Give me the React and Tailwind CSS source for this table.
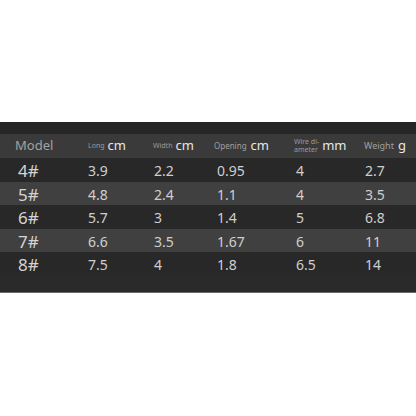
import React from 'react'

const rows = [
  ['4#', '3.9', '2.2', '0.95', '4', '2.7'],
  ['5#', '4.8', '2.4', '1.1', '4', '3.5'],
  ['6#', '5.7', '3', '1.4', '5', '6.8'],
  ['7#', '6.6', '3.5', '1.67', '6', '11'],
  ['8#', '7.5', '4', '1.8', '6.5', '14'],
]

const cols = 'grid grid-cols-[88px_65px_62px_76px_73px_52px] items-center'

function Head({ small, unit }) {
  return (
    <div className="flex items-center gap-[3px]">
      <span className="text-[7px] text-[#9a9a9a]">{small}</span>
      <span className="text-[13px] text-[#e6e6e6]">{unit}</span>
    </div>
  )
}

export default function App() {
  return (
    <div className="w-[416px] h-[416px] bg-white font-['Noto_Sans',sans-serif] flex flex-col">
      <div className="h-[122px]" />
      <div className="bg-[#282828] h-[171px] flex flex-col border-b border-[#6a6a6a]">
        <div className="h-[12px] bg-[#262626]" />
        <div className={`${cols} h-[24px] bg-[#3a3a3a]`}>
          <div className="pl-[15px] text-[13px] text-[#a3a3a3]">Model</div>
          <Head small="Long" unit="cm" />
          <Head small="Width" unit="cm" />
          <div className="flex items-center gap-[4px] -ml-[1px]">
            <span className="text-[8px] text-[#a0a0a0]">Opening</span>
            <span className="text-[13px] text-[#e6e6e6]">cm</span>
          </div>
          <div className="flex items-center gap-[3px] pl-[3px]">
            <span className="text-[7px] leading-[8px] text-[#9a9a9a]">Wire di-<br />ameter</span>
            <span className="text-[13px] text-[#e6e6e6]">mm</span>
          </div>
          <div className="flex items-center gap-[4px]">
            <span className="text-[9px] text-[#a0a0a0]">Weight</span>
            <span className="text-[13px] text-[#e6e6e6]">g</span>
          </div>
        </div>
        {rows.map((r, i) => (
          <div
            key={r[0]}
            className={`${cols} h-[23.5px] ${i % 2 === 0 ? 'bg-[#282828]' : 'bg-[#404040]'}`}
          >
            <div className="pl-[18px] text-[17px] text-[#d4d4d4]">{r[0]}</div>
            <div className="text-[14px] text-[#cfcfcf]">{r[1]}</div>
            <div className="pl-[1px] text-[14px] text-[#cfcfcf]">{r[2]}</div>
            <div className="pl-[2px] text-[14px] text-[#cfcfcf]">{r[3]}</div>
            <div className="pl-[5px] text-[14px] text-[#cfcfcf]">{r[4]}</div>
            <div className="pl-[1px] text-[14px] text-[#cfcfcf]">{r[5]}</div>
          </div>
        ))}
        <div className="flex-1 bg-[#2a2a2a]" />
      </div>
    </div>
  )
}
